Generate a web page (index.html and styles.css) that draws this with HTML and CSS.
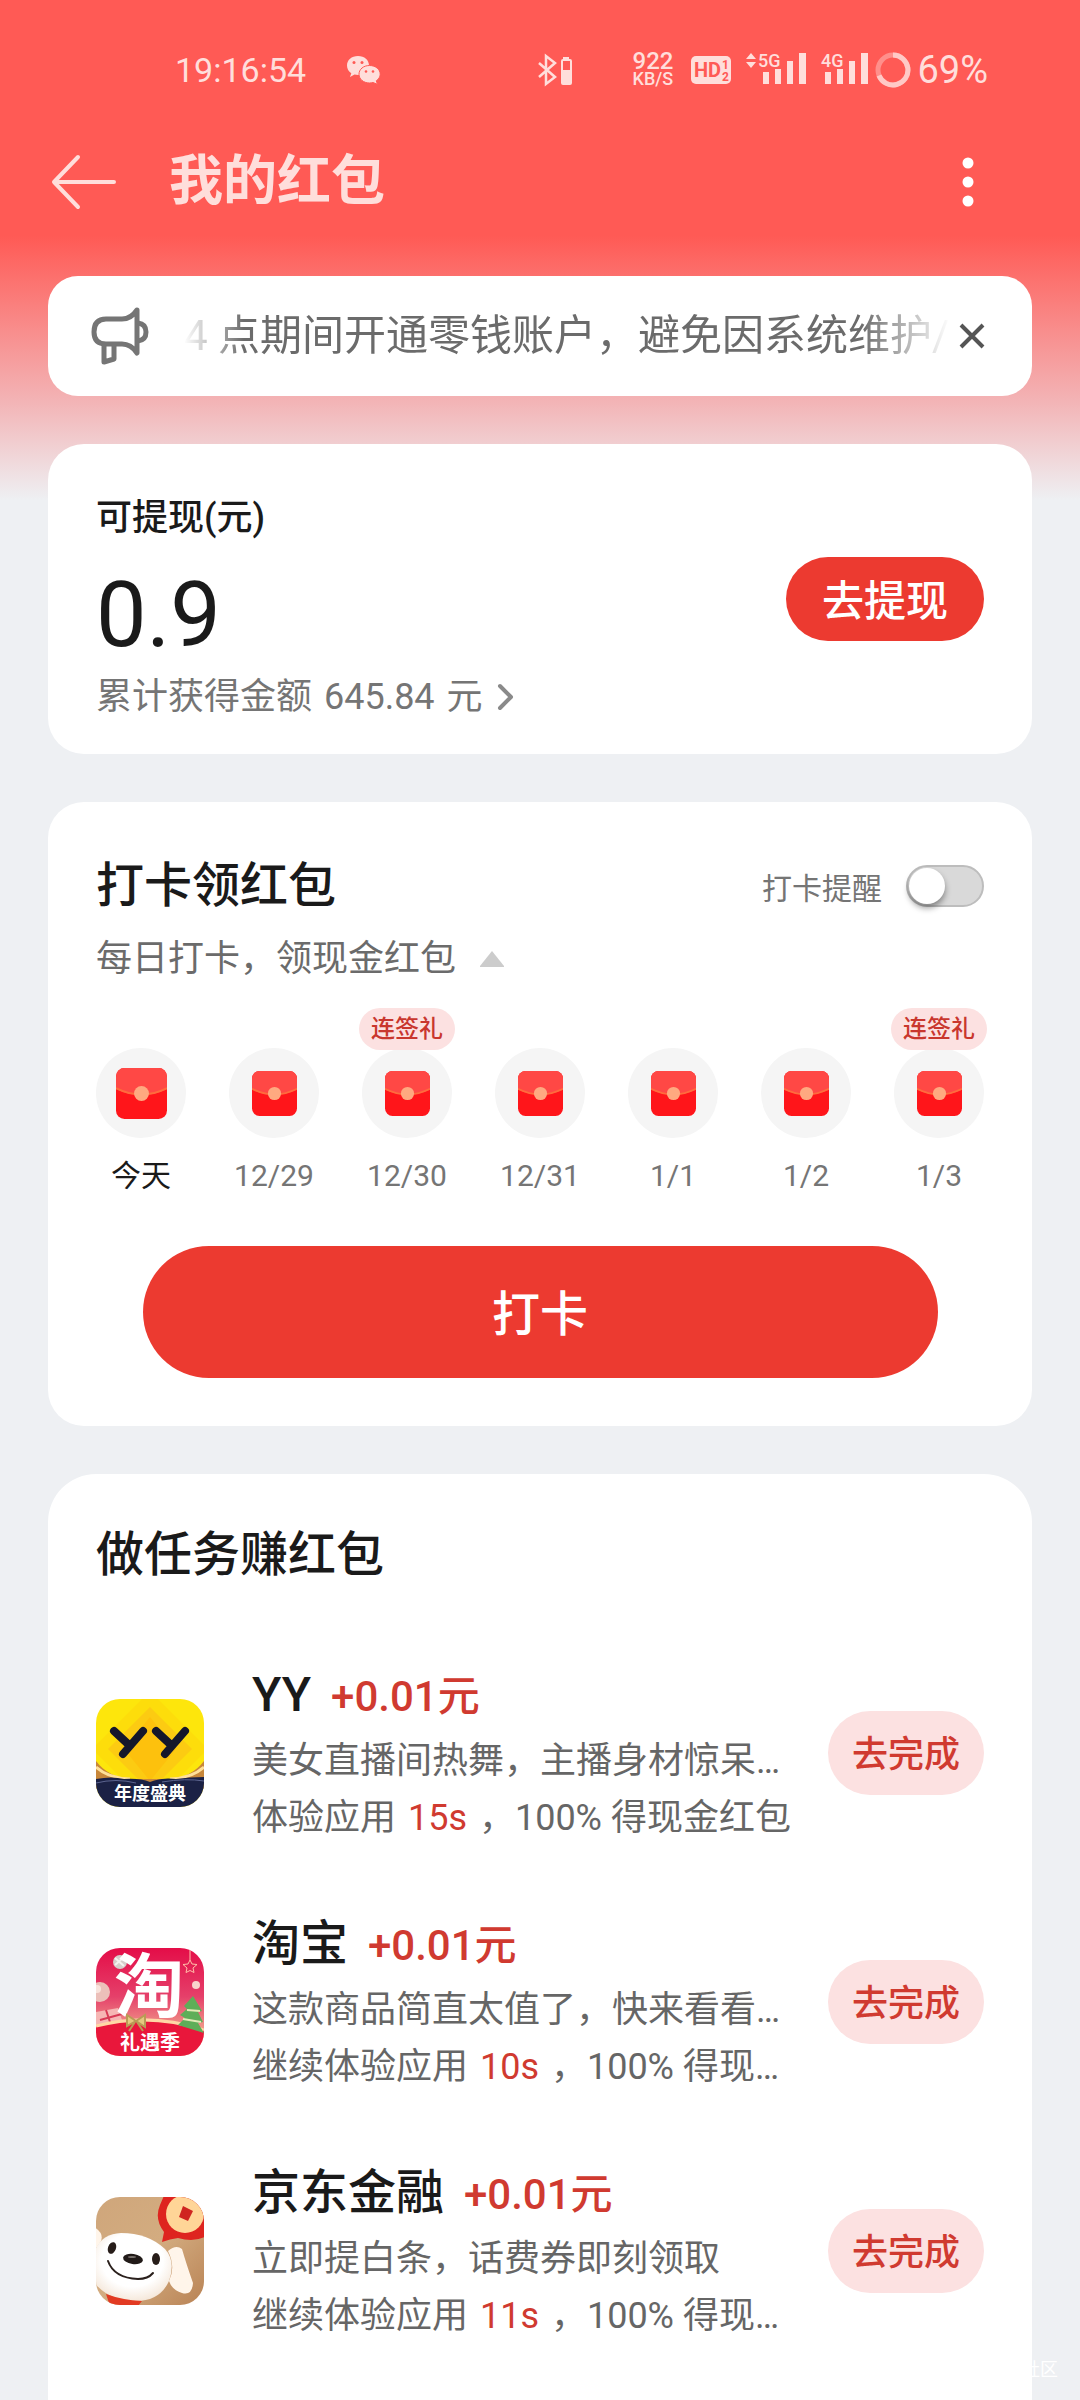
FILE: index.html
```html
<!DOCTYPE html>
<html lang="zh-CN">
<head>
  <meta charset="utf-8">
  <meta name="viewport" content="width=device-width, initial-scale=1">
  <title>我的红包</title>
  <link rel="stylesheet" href="styles.css">
</head>
<body>

  <!-- shared red packet icon -->
  <svg class="defs" width="0" height="0" aria-hidden="true">
    <defs>
      <clipPath id="packetClip"><rect width="48" height="48" rx="8"/></clipPath>
      <symbol id="packet" viewBox="0 0 48 48">
        <g clip-path="url(#packetClip)">
          <rect width="48" height="48" fill="#ff151a"/>
          <path d="M0 0H48V20Q24 31 0 20Z" fill="#ff4845"/>
          <path d="M0 19Q24 31 48 19" fill="none" stroke="#ff6b3d" stroke-width="2"/>
          <circle cx="24" cy="24" r="7" fill="#ffa980"/>
        </g>
      </symbol>
    </defs>
  </svg>

  <div class="page">

    <div class="status">
      <span class="time">19:16:54</span>
      <svg class="wechat" width="36" height="30" viewBox="0 0 36 30">
        <path d="M12 1C5.500 1 1 5 1 10.500c0 3.200 1.600 6 4.300 7.700L4 22l4.500-2.500c1.200.3 2.400.5 3.700.5C18.500 20 23 16 23 10.500S18.500 1 12 1Z" fill="#ffdedb"/>
        <path d="M23.500 10.500c-6 0-10.500 3.800-10.500 8.700s4.500 8.800 10.500 8.800c1.200 0 2.400-.2 3.500-.5l4.500 1.800-1.200-3.500c2.400-1.600 3.900-4 3.900-6.600 0-4.900-4.700-8.700-10.700-8.700Z" fill="#ffdedb" stroke="#ff5a55" stroke-width="1"/>
        <g fill="#ff5a55"><circle cx="8" cy="7.500" r="1.500"/><circle cx="16" cy="7.500" r="1.500"/><circle cx="20" cy="16.500" r="1.300"/><circle cx="27" cy="16.500" r="1.300"/></g>
      </svg>
      <div class="signals">
        <svg class="bluetooth" width="36" height="36" viewBox="0 0 36 36">
          <path d="M2 11l16 14-9 7V4l9 7L2 25" fill="none" stroke="#ffdedb" stroke-width="2.500"/>
          <path d="M26 6h6" stroke="#ffdedb" stroke-width="2"/>
          <rect x="25" y="8" width="9" height="24" rx="1" fill="none" stroke="#ffdedb" stroke-width="2"/>
          <rect x="25" y="18" width="9" height="14" fill="#ffdedb"/>
        </svg>
        <div class="speed"><b>922</b><span>KB/S</span></div>
        <svg width="40" height="36" viewBox="0 0 40 36">
          <rect y="4" width="40" height="28" rx="5" fill="#ffdedb"/>
          <text class="hd" x="3" y="25">HD</text>
          <text class="hd-num" x="31" y="17">1</text>
          <text class="hd-num" x="31" y="29">2</text>
        </svg>
        <svg width="62" height="48" viewBox="0 -6 62 48">
          <g fill="#ffdedb">
            <path d="M1 7l5-6 5 6ZM1 10l5 6 5-6Z"/>
            <text class="net" x="13" y="15">5G</text>
            <path d="M18 20h6v12h-6ZM30 17h6v15h-6ZM42 9h6v23h-6ZM54 1h7v31h-7Z"/>
          </g>
        </svg>
        <svg width="48" height="48" viewBox="0 -6 48 48">
          <g fill="#ffdedb">
            <text class="net" x="0" y="15">4G</text>
            <path d="M4 20h6v12H4ZM16 17h6v15h-6ZM28 9h6v23h-6ZM40 1h7v31h-7Z"/>
          </g>
        </svg>
        <svg class="ring" width="36" height="36" viewBox="0 0 36 36">
          <circle cx="18" cy="18" r="15" fill="none" stroke="#ff8f8b" stroke-width="5"/>
          <path d="M18 3A15 15 0 1 1 4 23.500" fill="none" stroke="#ffc9c6" stroke-width="5"/>
        </svg>
        <span class="battery">69%</span>
      </div>
    </div>

    <header class="topbar">
      <button class="icon-btn" aria-label="返回">
        <svg width="66" height="56" viewBox="0 0 66 56"><path d="M27 3L3 28l24 25M3 28h60" fill="none" stroke="#ffdedb" stroke-width="4" stroke-linecap="round" stroke-linejoin="round"/></svg>
      </button>
      <h1>我的红包</h1>
      <button class="icon-btn" aria-label="更多">
        <svg width="12" height="50" viewBox="0 0 12 50" fill="#fff"><circle cx="6" cy="6" r="5.500"/><circle cx="6" cy="25" r="5.500"/><circle cx="6" cy="44" r="5.500"/></svg>
      </button>
    </header>

    <main>
      <!-- NOTICE -->
      <section class="card notice">
        <svg width="60" height="60" viewBox="0 0 60 60" fill="none" stroke="#757575" stroke-width="5" stroke-linejoin="round">
          <path d="M47 4Q41 13 32 13H16Q4 13 4 26Q4 38 16 38H32Q41 38 47 47Z"/>
          <path d="M48 17Q56 18 56 26Q56 34 48 35"/>
          <path d="M14 39V56L24 53V39"/>
        </svg>
        <p class="marquee">4 点期间开通零钱账户，避免因系统维护/</p>
        <button class="icon-btn" aria-label="关闭">
          <svg width="28" height="28" viewBox="0 0 28 28"><path d="M3 3L25 25M25 3L3 25" stroke="#555" stroke-width="4"/></svg>
        </button>
      </section>

      <!-- BALANCE -->
      <section class="card balance">
        <div>
          <h2>可提现(元)</h2>
          <div class="amount">0.9</div>
          <a class="total" href="#"><span>累计获得金额 <b>645.84</b> 元</span>
            <svg width="18" height="28" viewBox="0 0 18 28"><path d="M3 3L14 14L3 25" fill="none" stroke="#8a8a8a" stroke-width="4" stroke-linecap="round" stroke-linejoin="round"/></svg>
          </a>
        </div>
        <button class="withdraw">去提现</button>
      </section>

      <!-- CHECK IN -->
      <section class="card checkin">
        <div class="checkin-head">
          <h2>打卡领红包</h2>
          <label for="remind">打卡提醒</label>
          <input class="switch" type="checkbox" id="remind">
        </div>
        <p class="sub">每日打卡，领现金红包
          <svg width="24" height="16" viewBox="0 0 24 16"><path d="M12 0L24 15V16H0V15Z" fill="#ccc"/></svg>
        </p>
        <ul class="days">
          <li class="today"><span class="dot"><svg><use href="#packet"/></svg></span><span class="date">今天</span></li>
          <li><span class="dot"><svg><use href="#packet"/></svg></span><span class="date">12/29</span></li>
          <li><span class="dot"><svg><use href="#packet"/></svg><em class="badge">连签礼</em></span><span class="date">12/30</span></li>
          <li><span class="dot"><svg><use href="#packet"/></svg></span><span class="date">12/31</span></li>
          <li><span class="dot"><svg><use href="#packet"/></svg></span><span class="date">1/1</span></li>
          <li><span class="dot"><svg><use href="#packet"/></svg></span><span class="date">1/2</span></li>
          <li><span class="dot"><svg><use href="#packet"/></svg><em class="badge">连签礼</em></span><span class="date">1/3</span></li>
        </ul>
        <button class="punch">打卡</button>
      </section>

      <!-- TASKS -->
      <section class="card tasks">
        <h2>做任务赚红包</h2>

        <div class="task">
          <svg class="app" viewBox="0 0 108 108">
            <rect width="108" height="108" fill="#fde60c"/>
            <path d="M54 -8L112 50L54 108L-4 50Z" fill="#fddd0b"/>
            <path d="M54 8L96 50L54 92L12 50Z" fill="#fccb12"/>
            <path d="M54 18L80 50L54 82L28 50Z" fill="#fdc10d"/>
            <path d="M0 62Q12 78 34 80H74Q96 78 108 62V90H0Z" fill="#c8873a"/>
            <path d="M0 68Q12 79 34 80M108 68Q96 79 74 80" fill="none" stroke="#ffe09a" stroke-width="3"/>
            <path d="M0 80Q16 77 28 80Q44 79 54 83Q66 78 80 80Q94 78 108 78V108H0Z" fill="#1b2145"/>
            <path d="M0 84Q20 79 40 84M66 83Q90 79 108 82" fill="none" stroke="#5d6590" stroke-width="1"/>
            <path d="M18 32L32 45M47 32L27 55M60 32L74 45M89 32L69 55" fill="none" stroke="#15172b" stroke-width="8" stroke-linecap="round"/>
            <text class="yy-label" x="54" y="101">年度盛典</text>
          </svg>
          <div class="info">
            <h3>YY<span class="reward">+0.01元</span></h3>
            <p>美女直播间热舞，主播身材惊呆…</p>
            <p>体验应用 <em>15s</em> ，100% 得现金红包</p>
          </div>
          <button class="go">去完成</button>
        </div>

        <div class="task">
          <svg class="app" viewBox="0 0 108 108">
            <defs>
              <linearGradient id="tbBg" x1="0" y1="0" x2="0" y2="1">
                <stop offset="0" stop-color="#e40d48"/>
                <stop offset="0.450" stop-color="#e5406a"/>
                <stop offset="0.800" stop-color="#f3a98f"/>
              </linearGradient>
            </defs>
            <rect width="108" height="108" fill="url(#tbBg)"/>
            <path d="M0 64L22 60L28 78L0 84Z" fill="#f6b6b4"/>
            <path d="M4 72L26 66M10 62L16 80" stroke="#d83a55" stroke-width="2"/>
            <circle cx="24" cy="14" r="7" fill="#d5cfcb"/>
            <path d="M19 10L28 18M28 9L19 17" stroke="#f5f2ef" stroke-width="2"/>
            <circle cx="4" cy="44" r="10" fill="#ecc0ba"/>
            <circle cx="1" cy="41" r="4" fill="#f8e3dc"/>
            <path d="M94 0V12M94 12l2 4 5 .5-4 3.500 1 4.500-4-2-4 2 1-4.500-4-3.500 5-.5Z" fill="none" stroke="#ffc0a8" stroke-width="1"/>
            <circle cx="100" cy="37" r="4" fill="#f8d4cc"/>
            <path d="M0 78Q54 62 108 82V108H0Z" fill="#e9173b"/>
            <path d="M0 78Q54 64 108 82" fill="none" stroke="#ffd7a5" stroke-width="3"/>
            <text class="tb-logo" x="53" y="64">淘</text>
            <path d="M97 48L106 63L102 64L107 74L102 75L108 85L82 77L89 70L84 67L91 61L88 58Z" fill="#5eae58"/>
            <path d="M91 62L104 63M87 71L105 74" stroke="#e3eab6" stroke-width="2"/>
            <path d="M40 73L31 67V78ZM40 73L49 67V79ZM39 74L33 83M41 74L47 83" fill="#e4c97f" stroke="#b99b55" stroke-width="2"/>
            <text class="tb-label" x="54" y="102">礼遇季</text>
          </svg>
          <div class="info">
            <h3>淘宝<span class="reward">+0.01元</span></h3>
            <p>这款商品简直太值了，快来看看…</p>
            <p>继续体验应用 <em>10s</em> ，100% 得现…</p>
          </div>
          <button class="go">去完成</button>
        </div>

        <div class="task">
          <svg class="app" viewBox="0 0 108 108">
            <defs>
              <linearGradient id="jdBg" x1="0" y1="0" x2="1" y2="1">
                <stop offset="0" stop-color="#cfa67b"/>
                <stop offset="0.500" stop-color="#d3ac80"/>
                <stop offset="1" stop-color="#b98355"/>
              </linearGradient>
              <radialGradient id="jdDog" cx="0.500" cy="0.400" r="0.650">
                <stop offset="0.600" stop-color="#fff"/>
                <stop offset="1" stop-color="#f3e3d3"/>
              </radialGradient>
            </defs>
            <rect width="108" height="108" fill="url(#jdBg)"/>
            <path d="M66 45L68 35Q58 22 64 8L70 -6H112V38Q100 46 82 41Q74 42 66 45Z" fill="#de241f"/>
            <circle cx="89" cy="17" r="19" fill="#ffd597"/>
            <path d="M87 9L97 14L92 24L83 20Z" fill="#cf2520"/>
            <path d="M72 54Q80 47 86 52Q90 66 97 86Q96 99 86 96Q76 93 73 84Q80 70 72 54Z" fill="#fff5ea"/>
            <path d="M-2 30Q8 36 5 44L-2 54Z" fill="#fff5ea"/>
            <path d="M-3 60Q2 37 25 36Q52 36 69 52Q80 64 73 84Q64 104 40 104Q12 104 -3 84Z" fill="url(#jdDog)"/>
            <ellipse cx="16" cy="51" rx="4" ry="6" fill="#271d19" transform="rotate(20 16 51)"/>
            <ellipse cx="60" cy="62" rx="4" ry="6" fill="#271d19"/>
            <ellipse cx="37" cy="62" rx="10" ry="5" fill="#211a18" transform="rotate(8 37 62)"/>
            <ellipse cx="36" cy="60" rx="4" ry="1" fill="#77706c"/>
            <path d="M12 64Q18 81 42 82Q52 82 57 76" fill="none" stroke="#2b211d" stroke-width="2" stroke-linecap="round"/>
            <path d="M10 97Q26 103 46 104L42 109H14Z" fill="#e23a22"/>
          </svg>
          <div class="info">
            <h3>京东金融<span class="reward">+0.01元</span></h3>
            <p>立即提白条，话费券即刻领取</p>
            <p>继续体验应用 <em>11s</em> ，100% 得现…</p>
          </div>
          <button class="go">去完成</button>
        </div>
      </section>
    </main>

    <div class="watermark">社区</div>
  </div>

</body>
</html>
```

FILE: styles.css
```css
* {
  box-sizing: border-box;
}
body, h1, h2, h3, p, ul {
  margin: 0;
  padding: 0;
}
body {
  font-family: Roboto, "Noto Sans CJK SC", sans-serif;
  background: #eef0f3;
  color: #1a1a1a;
}
button {
  font-family: inherit;
  border: 0;
  padding: 0;
  cursor: pointer;
}
em {
  font-style: normal;
}
svg {
  display: block;
  flex: none;
}
.defs {
  position: absolute;
}
.page {
  position: relative;
  display: flex;
  flex-direction: column;
  min-height: 100vh;
  background: linear-gradient(#ff5a55 236px, #f3b3b5 400px, #eef0f3 500px);
}

/* status bar */
.status {
  display: flex;
  align-items: center;
  height: 140px;
  padding: 0 92px 0 175px;
  color: #ffdedb;
}
.time {
  font-size: 34px;
}
.wechat {
  margin-left: 40px;
}
.signals {
  display: flex;
  align-items: center;
  gap: 14px;
  margin-left: auto;
}
.bluetooth {
  margin-right: 46px;
}
.speed {
  display: flex;
  flex-direction: column;
  margin-right: 4px;
  font-size: 18px;
  line-height: 18px;
  font-weight: 500;
}
.speed b {
  font-size: 24px;
  font-weight: 500;
}
.hd {
  font-size: 20px;
  font-weight: 700;
  fill: #ff5a55;
}
.hd-num {
  font-size: 12px;
  font-weight: 700;
  fill: #ff5a55;
}
.net {
  font-size: 18px;
  font-weight: 500;
}
.ring {
  margin: 0 -8px;
}
.battery {
  font-size: 38px;
}

/* title bar */
.topbar {
  display: flex;
  align-items: center;
  height: 84px;
  padding: 0 106px 0 51px;
}
.topbar h1 {
  flex: 1;
  margin-left: 52px;
  font-size: 54px;
  line-height: 84px;
  font-weight: 700;
  color: #ffdedb;
}
.icon-btn {
  background: none;
}

main {
  flex: 1;
  display: flex;
  flex-direction: column;
  gap: 48px;
  padding: 52px 48px 0;
}
.card {
  background: #fff;
  border-radius: 36px;
  padding: 48px;
}

/* notice */
.notice {
  display: flex;
  align-items: center;
  height: 120px;
  padding: 0 46px 0 42px;
  border-radius: 30px;
}
.marquee {
  flex: 1;
  min-width: 0;
  margin: 0 8px 0 34px;
  overflow: hidden;
  white-space: nowrap;
  font-size: 42px;
  line-height: 60px;
  color: #6b6b6b;
  mask-image: linear-gradient(to right, transparent, #000 60px, #000 calc(100% - 90px), transparent);
}

/* balance */
.balance {
  display: flex;
  align-items: center;
  justify-content: space-between;
  padding-bottom: 32px;
}
.balance h2 {
  font-size: 36px;
  line-height: 52px;
  font-weight: 500;
}
.amount {
  margin: 24px 0 8px;
  font-size: 90px;
  line-height: 96px;
  font-weight: 400;
}
.total {
  display: flex;
  align-items: center;
  gap: 14px;
  font-size: 36px;
  line-height: 50px;
  color: #757575;
  text-decoration: none;
}
.total b {
  margin: 0 3px;
  font-weight: 400;
}
.withdraw {
  width: 198px;
  height: 84px;
  margin-bottom: 16px;
  padding-bottom: 4px;
  border-radius: 42px;
  background: #ec3a30;
  color: #fff;
  font-size: 42px;
  font-weight: 500;
}

/* check in */
.checkin-head {
  display: flex;
  align-items: center;
}
.checkin-head h2 {
  flex: 1;
  font-size: 48px;
  line-height: 72px;
  font-weight: 500;
}
.checkin-head label {
  font-size: 30px;
  color: #757575;
}
.switch {
  appearance: none;
  width: 78px;
  height: 42px;
  margin: 0 0 0 24px;
  padding: 1px;
  border: 2px solid #bdbdbd;
  border-radius: 21px;
  background: #d9d9d9;
}
.switch::before {
  content: "";
  display: block;
  width: 36px;
  height: 36px;
  border-radius: 50%;
  background: #fff;
  box-shadow: 0 4px 6px rgba(0, 0, 0, 0.4);
}
.switch:checked {
  background: #ec3a30;
}
.switch:checked::before {
  margin-left: 36px;
}
.sub {
  display: flex;
  align-items: center;
  gap: 24px;
  margin-top: 12px;
  font-size: 36px;
  line-height: 50px;
  color: #6b6b6b;
}
.days {
  display: flex;
  justify-content: space-between;
  margin-top: 64px;
  list-style: none;
}
.days li {
  display: flex;
  flex-direction: column;
  align-items: center;
  width: 90px;
}
.dot {
  position: relative;
  display: flex;
  align-items: center;
  justify-content: center;
  width: 90px;
  height: 90px;
  border-radius: 50%;
  background: #f5f5f5;
}
.dot svg {
  width: 45px;
  height: 45px;
}
.today .dot svg {
  width: 51px;
  height: 51px;
}
.badge {
  position: absolute;
  left: -3px;
  top: -40px;
  width: 96px;
  height: 42px;
  border-radius: 21px;
  background: #fce1e1;
  color: #c9372e;
  font-size: 24px;
  line-height: 42px;
  font-weight: 500;
  text-align: center;
}
.date {
  margin-top: 20px;
  font-size: 30px;
  line-height: 36px;
  color: #757575;
}
.today .date {
  color: #1a1a1a;
}
.punch {
  display: block;
  width: calc(100% - 93px);
  height: 132px;
  margin: 52px auto 0;
  padding-bottom: 4px;
  border-radius: 66px;
  background: #ec3a30;
  color: #fff;
  font-size: 48px;
  font-weight: 500;
}

/* tasks */
.tasks {
  flex: 1;
  padding-bottom: 0;
  border-radius: 48px 48px 0 0;
}
.tasks h2 {
  margin-bottom: 40px;
  font-size: 48px;
  line-height: 66px;
  font-weight: 500;
}
.task {
  display: flex;
  align-items: center;
  height: 249px;
}
.app {
  width: 108px;
  height: 108px;
  border-radius: 24px;
}
.info {
  flex: 1;
  min-width: 0;
  margin: 0 24px 0 48px;
  white-space: nowrap;
}
.info h3 {
  font-size: 48px;
  line-height: 72px;
  font-weight: 500;
}
.reward {
  margin-left: 20px;
  font-size: 42px;
  font-weight: 500;
  color: #d03a30;
}
.info p {
  font-size: 36px;
  line-height: 57px;
  color: #666;
}
.info em {
  margin: 0 3px;
  color: #d03a30;
}
.go {
  width: 156px;
  height: 84px;
  padding-bottom: 4px;
  border-radius: 42px;
  background: #fce1e1;
  color: #d03a30;
  font-size: 36px;
  font-weight: 500;
}
.yy-label, .tb-label, .tb-logo {
  font-family: "Noto Sans CJK SC", sans-serif;
  font-weight: 700;
  text-anchor: middle;
  fill: #fff;
}
.yy-label {
  font-size: 18px;
}
.tb-label {
  font-size: 20px;
}
.tb-logo {
  font-size: 70px;
}

.watermark {
  position: absolute;
  right: 22px;
  bottom: 18px;
  font-size: 18px;
  line-height: 24px;
  color: #fff;
}
```
